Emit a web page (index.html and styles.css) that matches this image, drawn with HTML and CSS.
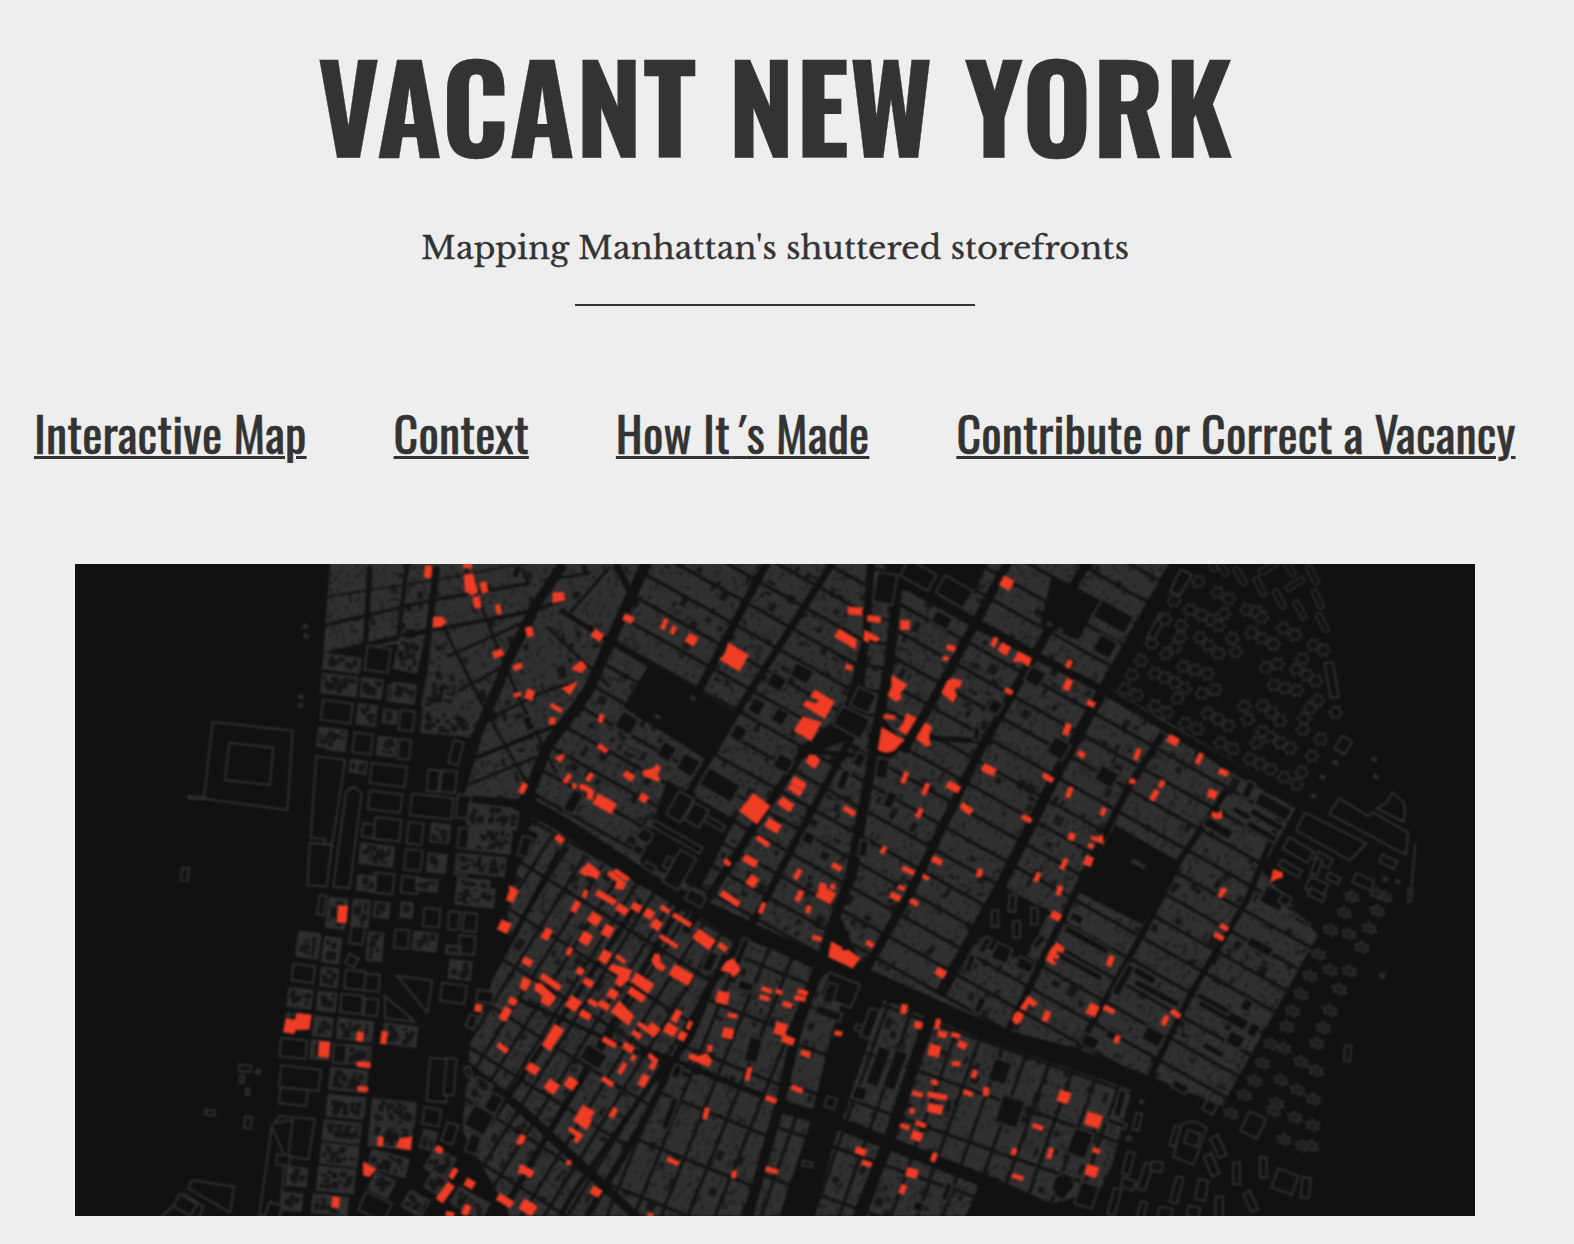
FILE: index.html
```html
<!DOCTYPE html>
<html lang="en">
<head>
<meta charset="utf-8">
<title>Vacant New York</title>
<link rel="stylesheet" href="styles.css">
</head>
<body>
<main class="page">
  <header class="masthead">
    <h1 class="title">VACANT NEW YORK</h1>
    <p class="subtitle">Mapping Manhattan's shuttered storefronts</p>
    <hr class="rule">
  </header>
  <nav class="nav">
    <a href="#map">Interactive Map</a>
    <a href="#context">Context</a>
    <a href="#how">How I<span class="stem">t</span><span class="tick">'</span>s Made</a>
    <a href="#contribute">Contribute or Correct a Vacancy</a>
  </nav>
  <svg class="map" id="map" width="1400" height="652" viewBox="75 564 1400 652"></svg>
</main>
<script src="map.js"></script>
</body>
</html>
```
FILE: styles.css
```css
body {
  margin: 0;
  background: #eee;
  color: #333;
  overflow: hidden;
}
.page {
  width: 1550px;
  display: flex;
  flex-direction: column;
  align-items: center;
}
.masthead {
  display: flex;
  flex-direction: column;
  align-items: center;
  padding-top: 44px;
}
.title {
  margin: 0;
  font: 700 120px/120px Oswald, Roboto, sans-serif;
  letter-spacing: .3px;
  -webkit-text-stroke: .3px #333;
  white-space: nowrap;
}
.subtitle {
  margin: 64px 0 0;
  font: 400 32px/40px "Libre Baskerville", "Liberation Serif", serif;
  -webkit-text-stroke: .3px #333;
  white-space: nowrap;
}
.rule {
  width: 400px;
  height: 2px;
  margin: 36px 0 0;
  border: 0;
  background: #333;
}
.nav {
  align-self: stretch;
  display: flex;
  gap: 87px;
  padding: 97px 0 0 34px;
  font: 400 48px/60px Oswald, Roboto, sans-serif;
  letter-spacing: .14px;
  -webkit-text-stroke: .5px #333;
  white-space: nowrap;
}
.nav a {
  color: #333;
  text-decoration-thickness: 3px;
  text-underline-offset: 2px;
}
.stem { letter-spacing: 1.5px; }
.tick {
  letter-spacing: 9.5px;
  font-style: italic;
}
.map {
  display: block;
  margin-top: 101px;
  background: #111;
  overflow: hidden;
}
```
FILE: map.js
```js
const NS = 'http://www.w3.org/2000/svg';
const map = document.getElementById('map');

// Origin of each survey sheet; sheet units are a third of a pixel.
const SHEETS = { nw: [70, 560], n: [520, 560], ne: [980, 560], sw: [70, 890], s: [520, 890], se: [980, 890] };

let seed = 7;
const rnd = () => (seed = (seed * 16807) % 2147483647) / 2147483647;
const el = (name, attrs, parent) => {
  const e = document.createElementNS(NS, name);
  for (const k in attrs) e.setAttribute(k, attrs[k]);
  parent.appendChild(e);
  return e;
};
const pts = a => { let s = ''; for (let i = 0; i < a.length; i += 2) s += a[i] + ',' + a[i + 1] + ' '; return s; };
const sheet = (key, parent) => el('g', { transform: `translate(${SHEETS[key]}) scale(.33333)` }, parent);

const defs = el('defs', {}, map);
el('feGaussianBlur', { stdDeviation: .85 }, el('filter', { id: 'soft', x: 0, y: 0, width: '100%', height: '100%', 'color-interpolation-filters': 'sRGB' }, defs));
const root = el('g', { filter: 'url(#soft)' }, map);
el('rect', { x: 60, y: 550, width: 1430, height: 680, fill: '#111' }, root);

// District: built-up polygon, street bearing, street spacings and offsets.
const DISTRICTS = [
  { p: [330,562,648,562,622,620,590,692,550,745,526,800,464,795,482,735,417,733,425,640,323,655], a: -12, g: [0, 0, 0, 0] },
  { p: [650,562,868,562,866,640,850,700,835,727,800,752,690,930,560,845,525,828,548,750,590,692,622,622], a: 29.3, g: [0, 24.6, 0, 0], o: [1103, 690] },
  { p: [872,562,898,562,888,660,876,740,862,722,868,640], a: 10, g: [0, 24, 0, 0], o: [880, 570] },
  { p: [902,562,1175,562,1107,686,1300,800,1262,870,1318,935,1222,1106,1140,1072,1075,1048,1005,1030,862,966,835,905,856,880,874,775,905,745,885,720,892,660], a: 29.3, g: [0, 24.6, 0, 0], o: [1103, 690] },
  { p: [800,760,868,730,872,780,852,880,820,955,690,905], a: 29.3, g: [0, 24.6, 0, 0], o: [1103, 690] },
  { p: [540,832,690,910,735,940,705,1000,683,1060,600,1216,510,1216,462,1130,470,1040,510,935,505,890], a: 32, g: [19.5, 46, 3, 10], o: [600, 900] },
  { p: [742,938,818,966,797,1030,778,1106,745,1216,587,1216,650,1100,684,1045,708,990], a: 22, g: [25, 52, 4, 18], o: [742, 938] },
  { p: [828,965,862,985,840,1050,815,1117,785,1100,797,1030], a: 20, g: [0, 40, 0, 5], o: [828, 965] },
  { p: [884,998,1135,1078,1112,1165,1100,1190,1045,1206,985,1180,965,1216,750,1216,782,1110,840,1125], a: 19.5, g: [24.5, 50, 4, 8], o: [886, 998] },
];
for (const [i, d] of DISTRICTS.entries()) {
  el('polygon', { points: pts(d.p) }, el('clipPath', { id: 'd' + i }, defs));
  const outer = el('g', { 'clip-path': `url(#d${i})` }, root);
  el('polygon', { points: pts(d.p), fill: '#303030' }, outer);
  const [ox, oy] = d.o || [450, 660];
  const g = el('g', { transform: `translate(${ox} ${oy}) rotate(${d.a})` }, outer);
  const c = Math.cos(d.a * Math.PI / 180), s = Math.sin(d.a * Math.PI / 180);
  let u0 = 1e9, u1 = -1e9, v0 = 1e9, v1 = -1e9;
  for (let k = 0; k < d.p.length; k += 2) {
    const x = d.p[k] - ox, y = d.p[k + 1] - oy, u = x * c + y * s, v = y * c - x * s;
    u0 = Math.min(u0, u); u1 = Math.max(u1, u); v0 = Math.min(v0, v); v1 = Math.max(v1, v);
  }
  // light wells, yards and lot lines
  let lots = '', yards = '', walls = '';
  for (let n = (u1 - u0) * (v1 - v0) / 34; n > 0; n--) {
    const u = u0 + rnd() * (u1 - u0), v = v0 + rnd() * (v1 - v0), r = rnd();
    const w = 1 + rnd() * 2.2, h = 1.2 + rnd() * 3;
    const box = (k) => `M${u.toFixed(1)} ${v.toFixed(1)}h${(w * k).toFixed(1)}v${(h * k).toFixed(1)}h${(-w * k).toFixed(1)}z`;
    if (r < .82) lots += box(1); else if (r < .86) yards += box(2); else if (r < .885) walls += box(3.2);
  }
  el('path', { d: lots, fill: '#202020' }, g);
  el('path', { d: yards, fill: '#181818' }, g);
  el('path', { d: walls, fill: '#171717', stroke: '#303030', 'stroke-width': 1 }, g);
  let st = '';
  if (d.g[0]) for (let u = Math.floor(u0 / d.g[0]) * d.g[0] + d.g[2]; u < u1; u += d.g[0]) st += `M${u} ${v0}V${v1}`;
  if (d.g[1]) for (let v = Math.floor(v0 / d.g[1]) * d.g[1] + d.g[3]; v < v1; v += d.g[1]) st += `M${u0} ${v}H${u1}`;
  el('path', { d: st, stroke: '#131313', 'stroke-width': 3.2, fill: 'none' }, g);
}

// Avenues and wide streets: width, then vertices.
const STREETS = [
  [11, 647,562,620,620,587,693,547,747,524,805,505,880],
  [8, 767,562,698,692], [7, 833,562,735,715,640,875], [8, 871,562,866,640,851,700,836,724,804,750,733,860,685,932],
  [10, 900,562,890,660,877,727,871,767,850,877,833,923,820,963,797,1030,780,1103,748,1216],
  [7, 857,727,800,833,760,910,737,950,707,990,683,1043,643,1123,587,1216],
  [9, 1008,562,977,620,937,693,903,752], [9, 1087,562,1043,640,980,750,910,893,864,972],
  [11, 1176,562,1103,690,1057,773,1000,887,940,995], [7, 1163,733,1127,790,1073,897,1007,1033],
  [6, 1227,790,1180,860,1150,920,1077,1050], [6, 1282,813,1247,900,1193,990,1150,1077],
  [8, 900,582,980,627,1107,692,1240,773,1300,806],
  [16, 518,800,560,823,647,880,690,902,820,963,880,990,990,1033,1147,1087,1210,1112],
  [13, 780,1106,837,1123,990,1183,1050,1210], [6, 640,1048,680,1063,780,1103],
  [12, 932,1010,890,1137,857,1220], [5, 725,955,690,1040,650,1085,575,1190,560,1216],
  [9, 460,1060,520,1108,560,1145,640,1220], [4, 520,1000,690,1076], [5, 640,900,520,1080,450,1180], [5, 560,850,495,970],
  [6, 680,905,580,1080,500,1216], [5, 930,738,980,741], [5, 800,750,870,757], [5, 650,666,560,610],
  [7, 530,810,500,920,455,1000,440,1180]
];
for (const [w, ...p] of STREETS) el('polyline', { points: pts(p), fill: 'none', stroke: '#111', 'stroke-width': w }, root);

const nwStreets = [[5,770,110,1100,60,1410,0],[9,765,195,1090,120,1380,70],[11,1090,210,1380,155,1480,120],[8,1130,290,1400,170],[8,1150,400,1300,320],[15,760,285,1080,210],
  [8,1210,500,1410,400,1500,370],[12,1200,600,1500,480],[8,1180,680,1400,590],[16,900,20,885,270],[12,1010,20,985,230],[20,1100,20,1040,520],[8,1185,20,1340,400,1460,640],
  [8,1120,200,1240,440,1400,720],[8,1350,12,1375,70],[30,1480,12,1400,130,1320,290,1250,460,1170,640,1150,760],[8,1430,200,1620,380],[8,1420,60,1560,40],[20,1640,12,1700,140],[8,1500,160,1620,20]];
const nws = sheet('nw', root);
for (const [w, ...p] of nwStreets) el('polyline', { points: pts(p), fill: 'none', stroke: '#121212', 'stroke-width': w }, nws);

// Parks and open ground.
for (const p of [[650,663,737,713,710,762,623,707],[1115,825,1180,862,1143,925,1078,892],[1052,575,1100,600,1078,640,1040,625],[867,973,883,1000,840,1123,812,1220,778,1220,810,1123,827,1050,850,975],
  [667,780,735,820,700,890,640,862],[1000,890,1050,910,1025,960,975,945],[880,560,990,560,970,600,900,590],[840,703,866,720,850,742,830,728]])
  el('polygon', { points: pts(p), fill: '#111' }, root);

// Single building outlines, as [x, y, w, h, angle] or a vertex list.
const OUTLINES = {
  nw: [[428,486,668,512,652,750,402,716],[478,548,610,563,600,675,465,660],[355,708,405,712,404,718,357,716],[739,588,826,600,786,855,762,850,765,838,722,833],
    [720,848,785,856,770,980,712,975],[828,695,850,680,875,700,838,985,790,980],[923,298,70,72,8],[955,645,105,60,7],[945,725,98,55,7],[1085,740,125,65,6],[878,550,55,60,7],
    [952,808,78,65,6],[1035,820,45,65,6],[1135,665,45,65,6],[1090,662,35,65,6],[800,455,90,60,8],[1010,482,42,60,7],[800,540,55,60,7],[1003,568,35,60,7],[1158,578,30,70,15],[895,812,35,40,8],
    [1030,900,50,60,6],[1180,740,40,70,6],[345,943,20,38,6],[1180,835,30,60,5],[1365,860,30,60,15],[1175,915,35,60,5],[940,970,60,60,6],[1020,975,50,50,6],[975,400,40,45,6],[1340,35,20,40,20],[1376,490,25,45,-25]],
  n: [[1095,85,60,90,10],[1195,45,95,55,30],[1303,95,95,60,30],[995,487,95,65,28],[505,615,55,55,30],[1030,420,60,60,25],[1087,625,35,60,10],[320,490,55,55,30],[440,575,45,50,30],[540,765,165,18,30],
    [470,830,170,20,30],[480,740,50,80,30],[530,765,50,60,30],[375,828,40,35,30],[355,870,30,25,30],[390,922,35,20,30],[478,930,55,110,30],[600,675,110,60,30],[445,908,20,35,30],[1265,180,55,40,30],
    [1018,600,30,40,30],[1030,865,25,50,10],[1110,720,30,50,25],[770,365,50,45,30],[845,340,60,45,30],[865,835,35,35,30],[160,725,35,70,30],[970,660,25,60,20],[655,520,40,45,30],[710,440,40,45,30],[780,470,40,45,30],[1370,520,20,40,0],[790,610,50,45,30]],
  ne: [[620,35,635,45,600,105,570,95,600,30],[550,165,560,175,515,245,500,235,540,160],[380,650,60,50,30],[235,565,55,55,30],[375,260,60,55,30],[400,170,110,60,30],[1090,555,35,45,30],[1055,360,25,105,-10],
    [1078,715,1165,768,1180,757,1285,818,1277,885,1048,762],[975,758,1158,850,1110,902,1035,860,948,810],[1238,698,1270,725,1276,755,1270,785,1190,745,1218,730],[1306,850,1295,980],[955,870,85,40,30],[1030,900,50,30,30],
    [1225,905,50,25,25],[1010,920,20,50,20],[930,925,70,22,30],[860,780,110,22,30],[845,815,100,22,30],[715,805,90,30,30],[805,690,25,50,25],[785,760,60,20,30],[1060,955,40,20,25],[1150,965,60,30,25],[1010,980,60,40,25],[880,740,110,40,30],[165,350,50,50,30],[45,440,35,40,30]],
  sw: [[982,258,1087,272,1072,368],[945,318,1035,395,945,385],[690,565,120,65,6],[670,620,82,48,6],[670,475,78,55,6],[612,700,630,678,735,688,715,808,655,800,668,690],[605,710,568,975,630,975,645,800],
    [365,870,492,890,480,968,355,895],[345,912,400,950,380,1000,270,985],[345,945,60,40,30],[1228,690,70,70,30],[1210,762,35,55,20],[1085,83,48,55,5],[1152,92,32,55,5],[1200,97,40,55,5],[995,147,42,55,5],
    [1190,165,48,55,5],[1150,310,75,55,8],[1245,320,50,35,10],[845,342,65,55,5],[903,352,40,50,5],[845,212,30,30,25],[905,278,45,50,5],[855,270,60,55,5],[755,45,20,58,8],[862,135,40,55,10],[1105,570,60,130,5],
    [1140,560,30,110,5],[812,492,45,55,6],[885,492,32,45,6],[825,650,105,60,6],[868,650,30,55,6],[715,165,65,70,8],[700,250,65,50,8],[665,935,60,50,5],[640,810,40,30,5],[915,950,85,60,25],[1040,940,60,50,30],
    [525,535,35,20,5],[565,545,12,10,5],[516,568,12,20,5],[532,605,10,18,5],[534,698,20,35,5],[420,668,28,14,5],[1195,545,15,30,-20],[1270,640,40,55,30],[1205,395,25,40,20],[1085,680,50,50,10],[1140,730,35,60,20],[610,965,40,50,20]],
  s: [[960,300,100,75,22],[925,370,80,28,20],[1020,415,28,18,15],[932,638,30,32,20],[862,822,28,14,15],[527,25,55,35,30],[677,288,45,28,15],[665,185,22,80,22],[700,480,40,75,15],[1050,400,30,90,20],[1075,530,40,120,20],
    [1125,540,40,120,20],[1020,610,40,40,20],[450,670,22,100,20],[470,545,25,40,20],[1380,345,22,50,25],[1350,220,20,55,15],[1385,170,22,45,25],[570,215,30,60,25],[1280,905,20,55,20],[1195,950,30,30,20],[220,500,70,50,32],[930,310,30,60,20]],
  se: [[820,705,55,65,25],[60,545,55,70,18],[90,665,70,85,18],[605,702,630,694,660,700,680,716,640,825,580,800],[637,745,40,40,18],[585,738,18,60,18],[300,760,60,80,20],[715,770,25,65,-25],[695,825,25,65,-22],[770,850,20,65,0],
    [850,832,20,60,0],[977,893,25,60,5],[812,935,22,60,-25],[718,955,22,70,0],[665,900,30,60,10],[590,900,22,80,15],[495,860,25,80,18],[530,830,35,28,10],[445,820,22,70,15],[445,882,40,28,20],[403,935,22,80,15],
    [485,965,20,60,15],[555,970,40,35,10],[640,965,35,30,15],[915,875,65,60,20],[472,695,18,50,12],[420,640,22,80,15],[410,700,60,15,20],[232,925,215,895,225,862,250,848,278,860,284,890,262,915,255,930],[320,915,55,70,18],[1103,490,18,45,5],[1290,15,10,40,5],
    [520,440,60,45,28],[490,255,80,25,30],[430,270,25,100,30],[530,310,150,22,28],[730,370,160,35,29],[700,340,110,20,29],[320,150,150,22,29],[300,230,150,20,29],[45,85,20,50,0],[97,40,20,50,5],[110,118,20,50,0],
    [163,78,20,50,0],[178,155,20,45,40],[65,190,50,50,25],[15,165,20,50,30],[135,225,50,35,25],[880,25,70,55,28],[915,30,30,30,28],[1010,15,50,22,25],[965,95,50,12,28],[840,170,80,30,28],[700,480,70,22,28],
    [765,450,50,40,28],[820,420,30,40,28],[800,345,30,35,28],[330,455,50,35,28],[395,435,35,25,28],[690,650,35,35,28],[600,590,50,25,28],[485,635,8,8,30],[447,745,12,10,30],[1207,256,12,10,10],[50,580,8,8,0],[290,85,40,25,29]]
};
// Partly built blocks in the west.
const BLOCKS = {
  nw: [[815,310,115,50,8],[808,375,110,62,7],[905,385,68,62,7],[1000,400,75,62,7],[890,465,60,65,7],[960,470,45,45,7],[785,535,88,62,7],[950,560,60,60,7],[865,620,55,42,7],[1130,490,150,70,5],[1015,285,75,100,12],[920,885,105,65,7],[1110,820,60,60,6],[1260,770,140,70,7],[1260,840,130,75,6],
    [1235,915,145,60,6],[1100,910,60,60,6],[1110,405,100,90,10],[890,970,60,50,6],[1070,975,70,40,6],[1210,975,100,40,6],[1330,780,30,60,7]],
  sw: [[800,70,60,95,8],[872,70,55,85,6],[935,60,50,50,6],[915,170,50,90,5],[1065,155,75,60,7],[1170,240,70,60,7],[785,180,55,80,8],[715,165,60,80,8],[778,262,55,60,6],[690,325,75,60,7],[770,335,60,60,6],[670,395,50,50,6],
    [758,410,60,62,6],[855,420,110,65,6],[990,435,105,65,7],[750,480,60,60,6],[860,495,70,60,6],[835,570,115,70,6],[825,652,110,65,6],[970,668,135,75,6],[815,725,115,65,6],[960,740,130,70,6],[808,795,115,65,6],[798,870,115,75,6],
    [780,945,110,60,6],[955,820,120,60,15],[680,860,65,60,5],[935,885,70,60,25],[1010,60,40,50,6],[1150,180,50,30,6],[1215,20,120,60,6],[1110,820,75,75,30],[1075,750,45,60,15],[1230,600,60,70,30],[1030,940,60,55,30],[665,935,60,50,5],[1100,880,60,60,30],[1200,940,110,60,30]]
};
const shape = (s, attrs, parent) => s.length !== 5
  ? el(s.length === 4 ? 'polyline' : 'polygon', { points: pts(s), ...attrs }, parent)
  : el('rect', { x: s[0] - s[2] / 2, y: s[1] - s[3] / 2, width: s[2], height: s[3], transform: `rotate(${s[4]} ${s[0]} ${s[1]})`, ...attrs }, parent);

for (const k in OUTLINES) {
  const g = sheet(k, root);
  for (const s of OUTLINES[k]) shape(s, { fill: '#111', stroke: '#2f2f2f', 'stroke-width': 6 }, g);
}
for (const k in BLOCKS) {
  const g = sheet(k, root);
  for (const [x, y, w, h, a] of BLOCKS[k]) {
    const b = el('g', { transform: `translate(${x} ${y}) rotate(${a})` }, g);
    el('rect', { x: -w / 2, y: -h / 2, width: w, height: h, fill: '#2e2e2e' }, b);
    for (let i = w * h / 400; i > 0; i--) {
      const bw = 6 + rnd() * 13, bh = 6 + rnd() * 15;
      el('rect', { x: -w / 2 + 5 + rnd() * (w - bw - 10), y: -h / 2 + 5 + rnd() * (h - bh - 10), width: bw, height: bh, fill: '#161616' }, b);
    }
  }
}

// Cruciform housing towers.
const TOWERS = {
  ne: [655,65,712,98,747,117,582,122,630,150,665,165,693,180,715,197,732,160,604,197,600,232,585,262,558,282,515,250,555,178,660,232,685,255,715,280,757,235,767,275,815,218,845,235,880,252,610,320,645,330,682,342,525,340,555,353,585,368,613,385,593,415,
    665,400,705,390,483,302,455,345,435,387,470,405,525,438,560,457,615,490,652,507,683,460,715,478,745,497,793,438,803,478,848,437,875,458,900,482,857,322,893,312,882,375,915,385,950,392,967,297,950,328,980,345,1007,362,1013,422,990,445,972,475,968,508,
    1067,457,1022,537,995,588,848,515,830,548,870,530,900,548,930,565,722,548,758,567,810,597,840,612,872,628,912,652,950,672,965,637,800,150,830,155,845,172,910,205,945,225,1000,255,1030,270],
  se: [1115,20,1092,68,1052,120,1107,132,1192,62,1168,115,1146,172,1015,193,1108,243,1050,240,990,258,963,313,938,362,1078,298,1050,362,1030,413,920,410,873,462,912,475,1010,460,848,520,963,515,1008,542,823,572,902,570,953,600,793,615,1000,628,890,640,
    753,670,945,682,998,706,912,748,967,767,995,767,880,662,1215,20,1190,10,725,590]
};
const star = 'M-6-20L2-12L12-17L13-6L21 2L12 7L10 17L0 12L-10 18L-13 7L-21 0L-12-6Z';
for (const k in TOWERS) {
  const g = sheet(k, root);
  for (let i = 0; i < TOWERS[k].length; i += 2)
    el('path', { d: star, transform: `translate(${TOWERS[k][i]} ${TOWERS[k][i + 1]})${k === 'se' ? ' rotate(25) scale(1.15 .85)' : ''}`, fill: k === 'se' ? '#202020' : '#131313', stroke: '#2b2b2b', 'stroke-width': 5 }, g);
}
const slabs = sheet('ne', root);
for (const [x, y, a] of [[725,20,-30],[780,48,-32],[840,80,-28],[898,117,-28],[960,150,-28],[1027,188,-28],[863,25,60],[945,72,60],[927,20,-30],[998,45,-28],[1013,117,-25],[692,5,-30]])
  el('rect', { x: -9, y: -31, width: 18, height: 62, rx: 7, transform: `translate(${x} ${y}) rotate(${a})`, fill: '#121212', stroke: '#2c2c2c', 'stroke-width': 5 }, slabs);
for (const [k, x, y] of [['nw',705,200],['nw',708,228],['nw',692,410],['nw',692,436],['ne',208,193],['ne',240,211],['ne',1182,598],['ne',1188,650],['ne',1027,650],['ne',1066,608],['ne',1000,708],['ne',1215,958],['ne',1253,965],['n',412,470],['n',518,415],['ne',462,904],['ne',474,911],['ne',488,918]])
  el('rect', { x: x - 8, y: y - 7, width: 17, height: 14, fill: '#2b2b2b', transform: `rotate(30 ${x} ${y})` }, sheet(k, root));

// Vacant storefronts.
const VACANT = {
  nw: [[1074,35,20,36,5],[1193,17,26,14,0],[1182,45,1208,40,1224,98,1206,105,1186,95],[1242,82,20,32,-12],[1221,127,20,34,-10],[1285,148,14,28,-10],[1090,172,1115,170,1130,187,1112,200,1088,202],[1379,215,18,28,-15],[1284,281,30,20,-22],[1343,320,26,16,-25],
    [1342,404,22,11,-12],[1380,404,22,28,20],[1359,685,16,30,25],[1318,976,1340,988,1318,990]],
  n: [[98,98,130,96,136,120,98,130],[28,216,18,28,-15],[325,176,30,20,25],[232,226,32,24,35],[433,192,14,32,22],[460,210,14,24,25],[515,239,30,28,30],[0,318,10,14,0],[155,325,185,302,200,320,185,338,155,328],[125,385,173,365,150,405],[28,404,22,28,20],[109,444,38,12,30],[97,483,18,20,10],
    [243,475,14,24,15],[248,565,32,14,38],[104,594,136,580,122,608],[10,685,15,30,25],[142,656,14,30,35],[209,651,15,26,35],[163,678,12,14,0],[178,676,190,672,222,690,218,720,200,716,202,695,180,688],[254,731,64,34,30],[326,648,32,20,35],[368,632,402,624,410,612,422,622,412,645,422,660,412,664,390,655,372,648],[371,714,24,22,30],[119,837,26,18,38],
    [205,908,240,935,232,958,210,948,190,946,178,935],[262,938,275,934,318,968,310,990,285,985,290,965,265,948],[305,945,50,13,35],
    [625,248,686,285,658,334,598,298,615,282],[886,390,944,425,914,476,848,435,858,422,890,432,895,420,870,410],[848,470,904,487,874,543,822,512],[888,586,900,602,885,626,857,608,868,584],[836,670,44,22,32],[826,690,42,18,32],[798,733,44,26,35],[700,700,751,738,711,793,658,752],[759,797,44,28,32],[729,844,42,15,35],[691,903,44,22,30],[697,964,28,32,35],[622,908,22,14,40],
    [1005,153,42,22,5],[958,206,1010,240,1006,268,943,230],[1062,177,40,18,8],[1034,210,1080,235,1070,246,1048,238,1044,248,1030,240],[1155,195,28,28,0],[987,322,20,14,20],[1293,264,26,16,20],[1277,295,18,12,10],
    [1115,345,1162,375,1140,400,1145,415,1128,425,1102,405,1115,385],[1108,471,34,12,5],[1160,460,1190,475,1158,525,1135,508,1150,490],[1085,502,1152,540,1122,572,1098,578,1074,570],[1215,488,1236,500,1226,530,1232,555,1218,560,1188,535],
    [1300,355,1325,362,1320,382,1302,385,1310,405,1300,428,1265,398,1282,362],[1154,653,14,36,22],[1217,687,14,36,22],[1300,681,40,22,28],[1198,759,14,30,25],[1339,746,38,20,38],[1400,627,26,22,30],[988,753,38,16,32],[1090,870,14,22,30],[1251,902,32,18,28],[950,921,30,16,32],
    [1165,932,38,14,25],[1378,939,14,24,22],[1217,952,20,12,30],[833,943,14,32,30],[908,980,22,20,20],[938,980,14,16,0],[1145,984,22,12,20]],
  ne: [[80,69,34,32,30],[43,246,14,28,25],[73,267,30,28,30],[115,274,155,295,145,320,125,305,98,306],[86,394,24,14,30],[267,312,14,24,28],[263,374,20,34,22],[333,431,24,16,25],[261,508,18,34,20],[304,583,22,16,35],[27,629,40,22,28],[204,653,34,16,32],[268,697,14,32,22],[369,755,14,24,22],[140,776,30,15,28],[275,830,18,22,20],
    [332,826,350,832,368,824,370,852,352,845,334,838],[333,858,16,14,20],[325,903,24,28,20],[252,912,14,34,25],[172,951,14,28,22],[240,985,16,14,0],[472,583,14,34,20],[457,664,18,14,15],[545,672,14,22,25],[523,706,16,34,28],[579,541,32,24,28],[658,596,14,34,25],[730,637,28,17,22],[697,702,26,24,20],
    [696,755,712,760,726,752,726,775,708,778,694,768],[880,928,908,938,908,952,888,958,872,966],[0,938,12,20,0],[730,990,20,10,0]],
  sw: [[817,72,28,50,5],[1320,0,1347,0,1328,38,1308,30],[1303,110,32,32,25],[1372,215,28,20,30],[1358,262,1382,272,1365,304,1350,290],[1405,292,20,24,0],[1225,354,20,22,10],[1328,334,24,20,30],[1306,372,24,40,28],[1298,474,36,15,38],[1388,536,32,24,35],
    [680,370,724,374,718,418,676,420,672,432,640,426,648,386,676,390],[870,440,20,28,10],[942,443,18,38,8],[762,478,32,46,5],[881,524,40,16,6],[878,597,30,15,6],[931,754,16,28,5],[990,745,1026,740,1022,780,978,772],[880,815,918,838,898,860,880,855],[797,937,22,32,5],[1107,779,22,18,35],[1150,850,16,32,30],[1135,875,1154,890,1118,940,1098,925],
    [1352,749,14,32,30],[1350,825,1392,848,1382,862,1358,850,1345,852],[1199,881,28,24,30],[1305,932,50,22,32],[1373,952,42,34,32],[1189,960,20,32,25],[1140,973,24,14,10]],
  s: [[167,50,18,34,28],[195,12,12,24,20],[258,23,64,18,30],[306,58,36,22,35],[349,52,28,22,30],[387,72,28,26,30],[435,58,30,14,32],[409,104,28,28,35],[486,90,62,14,32],[630,26,64,18,34],[224,87,34,32,35],[263,123,28,34,30],[197,145,32,34,30],[80,132,22,34,30],[148,184,14,24,25],[446,154,62,13,33],[552,148,62,34,36],[608,171,28,16,38],
    [255,200,28,36,30],[302,207,34,12,38],[405,190,420,195,420,215,438,232,428,244,405,232,395,210],[180,244,20,20,30],[205,278,30,20,32],[275,222,335,240,325,270,300,292,285,278,295,255,265,238],[92,276,68,18,35],[62,280,108,322,88,350,60,335,68,318,42,298],[367,279,64,32,34],[350,314,54,22,34],[484,255,66,36,31],[278,312,28,26,30],[160,341,36,36,35],[196,375,34,20,30],[218,338,30,14,30],[252,346,32,20,34],
    [298,332,342,378,325,406,272,366],[358,395,385,412,395,396,422,418,402,442,350,405],[350,434,30,15,33],[325,473,34,20,32],[268,457,44,16,30],[340,504,14,16,20],[22,215,28,18,30],[16,283,22,34,28],[104,402,132,420,90,484,66,465],[38,536,34,24,32],[95,590,36,34,35],[153,580,32,32,35],[307,535,14,36,30],[263,575,38,15,34],[390,488,415,510,400,542,385,532,398,515,382,500],[371,572,22,36,28],
    [452,419,36,30,30],[487,438,22,26,28],[469,378,20,36,28],[508,406,12,26,22],[640,205,662,240,640,262,630,248,602,240,618,215],[608,323,36,36,12],[637,377,28,12,8],[624,430,32,30,12],[510,490,535,498,560,490,575,510,568,530,540,520,505,506],[569,475,14,20,0],[740,300,32,13,20],[734,324,30,13,15],[777,306,20,13,25],[802,344,28,15,20],[848,307,30,14,15],[840,325,34,14,10],[782,417,34,36,15],[804,450,38,22,22],
    [857,491,28,16,18],[955,430,22,14,10],[831,597,34,15,22],[685,552,13,40,15],[753,628,34,15,22],[558,670,14,34,15],[280,668,16,30,30],[188,645,225,665,212,685,215,692,200,720,160,692],[150,710,190,735,172,760,160,752,168,738,145,722],[146,818,14,14,0],[228,905,30,24,30],[25,952,44,32,32],[5,748,18,22,20],[18,843,42,22,30],[459,814,36,14,25],[642,853,14,22,12],[755,841,38,14,15],[391,975,16,10,0],
    [838,18,16,34,25],[865,58,14,22,12],[917,15,50,36,28],[726,54,13,34,22],[891,145,28,13,15],[934,155,965,172,968,182,985,180,1020,205,998,235,925,200],[1126,20,32,18,25],[1182,37,26,14,30],[1050,162,24,15,32],[1262,248,30,24,30],[1152,357,18,28,10],[1195,405,24,20,10],[1253,402,14,30,12],[1267,433,26,18,8],[1307,436,26,13,15],[1327,465,26,20,25],[1243,482,34,34,15],[1308,521,24,14,5],[1363,552,14,24,18],[1244,577,20,14,25],
    [1192,612,32,13,15],[1252,618,58,16,10],[1245,656,44,26,12],[1344,609,28,14,22],[1398,604,13,24,0],[1176,662,13,16,0],[1154,710,28,13,18],[1202,703,32,13,20],[1190,738,32,26,20],[1242,802,15,26,22],[1022,784,32,20,20],[1040,821,28,14,15],[1176,849,34,26,15],[1148,898,17,28,20]],
  se: [[237,5,15,22,15],[725,10,14,26,30],[228,78,30,22,30],[732,112,26,14,30],[717,140,30,15,28],[230,157,254,175,248,188,232,182,228,190,240,200,234,206,222,204,218,212,230,216,222,226,197,210,210,180],[391,213,16,32,20],[145,317,174,340,162,350,145,340,138,362,120,355],[96,390,105,368,118,364,132,376,122,396,108,404],[199,379,18,32,20],[338,360,30,34,25],[387,359,34,15,28],[587,371,32,15,35],[555,391,15,30,25],[411,448,15,22,22],
    [18,605,16,24,5],[252,621,34,34,20],[340,690,46,38,18],[173,711,32,14,18],[102,785,14,20,15],[210,790,14,32,15],[349,782,22,14,20],[335,843,36,32,18],[113,861,34,13,18]]
};
for (const k in VACANT) {
  const g = sheet(k, root);
  for (const s of VACANT[k]) shape(s, { fill: '#ef3c24', stroke: '#ef3c24', 'stroke-width': 1.5 }, g);
}
```
